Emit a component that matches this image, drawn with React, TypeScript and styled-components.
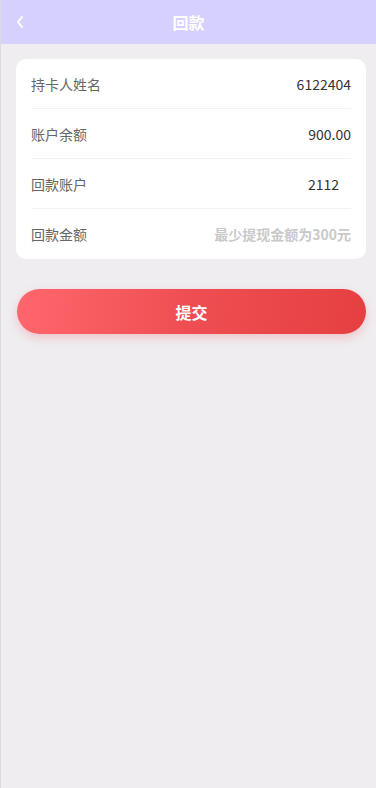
import React from "react";
import styled, { createGlobalStyle } from "styled-components";

const Global = createGlobalStyle`
  html, body { margin: 0; padding: 0; }
  body {
    font-family: "Noto Sans CJK SC", "Noto Sans", sans-serif;
    background: #efedf0;
  }
  * { box-sizing: border-box; }
`;

const Page = styled.div`
  min-height: 788px;
  background: #efedf0;
  border-left: 1px solid #dcdadd;
  display: flex;
  flex-direction: column;
`;

const Header = styled.header`
  height: 44px;
  background: #d6d0fe;
  display: flex;
  align-items: center;
  justify-content: center;
  position: relative;
`;

const Back = styled.button`
  position: absolute;
  left: 9px;
  top: 12px;
  width: 20px;
  height: 20px;
  border: 0;
  background: transparent;
  padding: 0;
  display: flex;
  align-items: center;
  justify-content: center;
`;

const Title = styled.h1`
  margin: 0;
  font-size: 16px;
  font-weight: 700;
  color: #ffffff;
`;

const Card = styled.section`
  margin: 15px 10px 0 15px;
  background: #ffffff;
  border-radius: 10px;
  padding: 0 15px;
`;

const Row = styled.div<{ $last?: boolean }>`
  height: 50px;
  display: flex;
  align-items: center;
  justify-content: space-between;
  border-bottom: ${(p) => (p.$last ? "none" : "1px solid #f2f1f3")};
`;

const Label = styled.span`
  font-size: 14px;
  color: #666666;
`;

const Value = styled.span<{ $pr?: number }>`
  font-size: 14px;
  color: #333333;
  padding-right: ${(p) => p.$pr ?? 0}px;
`;

const Input = styled.input`
  border: 0;
  outline: none;
  text-align: right;
  font-family: inherit;
  font-size: 14px;
  font-weight: 700;
  color: #333;
  width: 200px;
  padding: 0;
  background: transparent;
  &::placeholder { color: #c9c9c9; }
`;

const Submit = styled.button`
  margin: 30px 10px 0 16px;
  height: 45px;
  border: 0;
  border-radius: 23px;
  background: linear-gradient(100deg, #ff676d 0%, #ee4e52 50%, #e63f41 100%);
  box-shadow: 0 4px 10px rgba(240, 80, 90, 0.25);
  color: #ffffff;
  font-family: inherit;
  font-size: 16px;
  font-weight: 700;
`;

export default function App() {
  return (
    <>
      <Global />
      <Page>
        <Header>
          <Back aria-label="back">
            <svg width="10" height="14" viewBox="0 0 10 14">
              <path d="M7 2 L3 7 L7 12" fill="none" stroke="#fff" strokeWidth="2" strokeLinecap="round" strokeLinejoin="round" />
            </svg>
          </Back>
          <Title>回款</Title>
        </Header>
        <Card>
          <Row>
            <Label>持卡人姓名</Label>
            <Value>6122404</Value>
          </Row>
          <Row>
            <Label>账户余额</Label>
            <Value>900.00</Value>
          </Row>
          <Row>
            <Label>回款账户</Label>
            <Value $pr={12}>2112</Value>
          </Row>
          <Row $last>
            <Label>回款金额</Label>
            <Input placeholder="最少提现金额为300元" />
          </Row>
        </Card>
        <Submit>提交</Submit>
      </Page>
    </>
  );
}
